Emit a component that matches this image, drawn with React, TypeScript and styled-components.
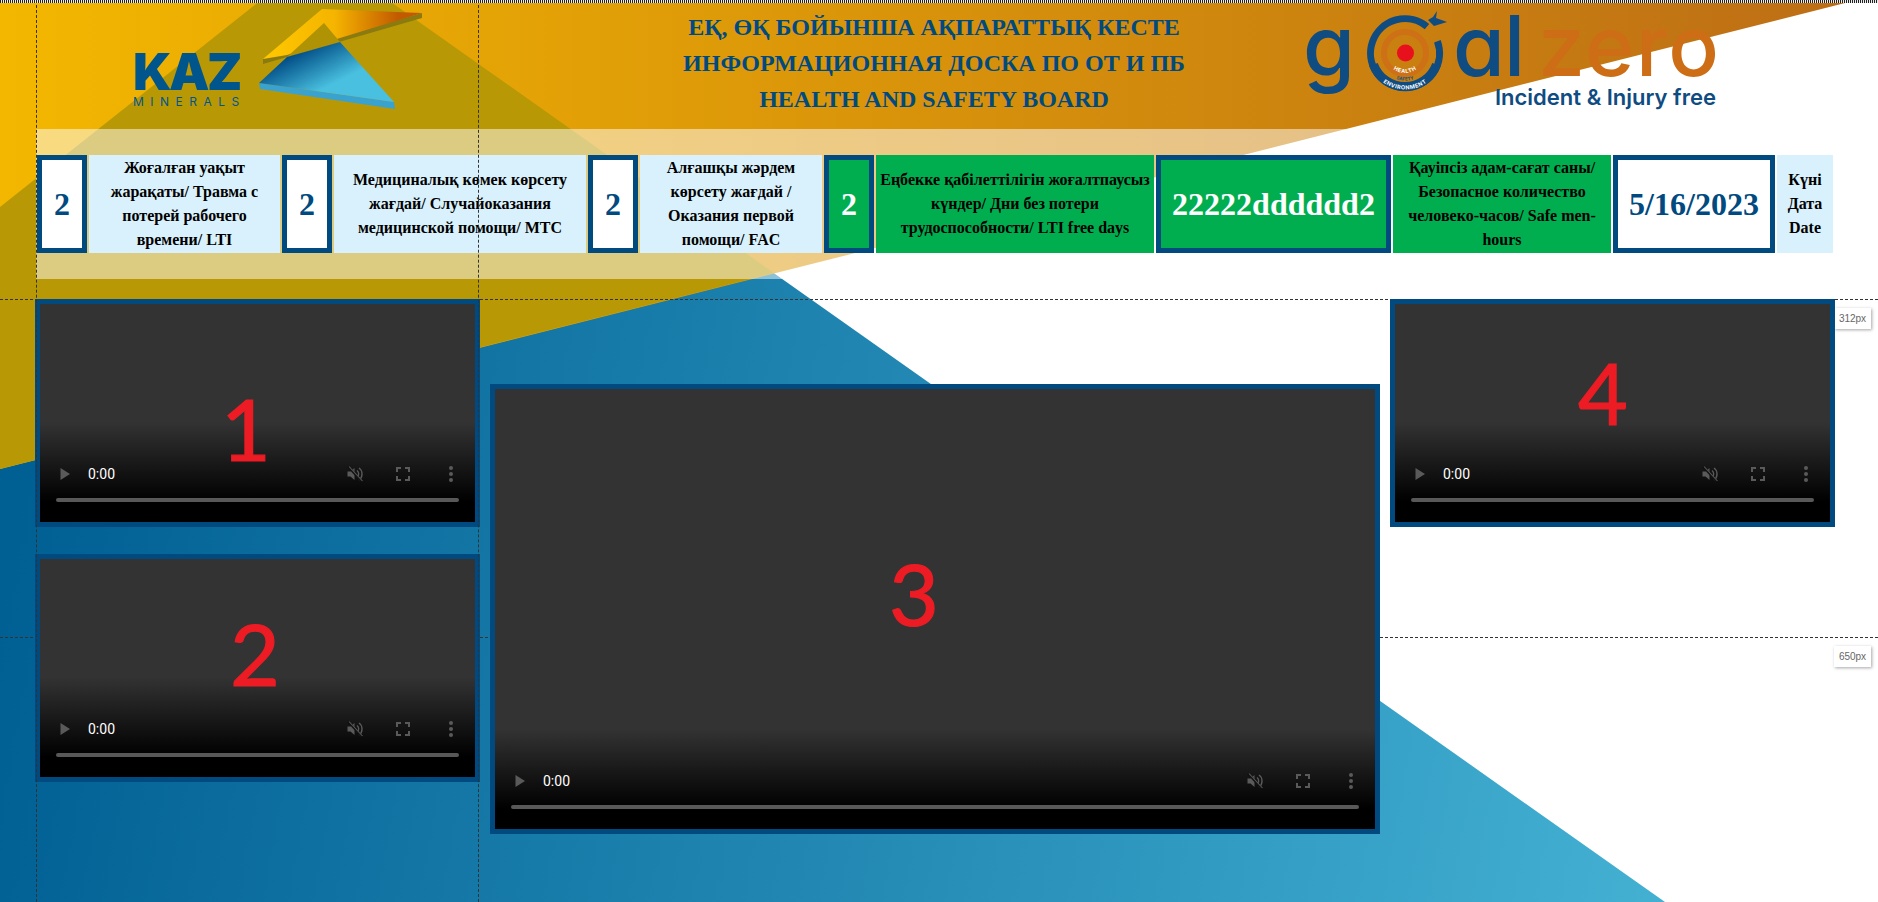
import React from "react";
import styled, { createGlobalStyle } from "styled-components";

const Global = createGlobalStyle`
  html, body { margin: 0; padding: 0; background: #fff; overflow: hidden; }
  * { box-sizing: border-box; }
`;

const Page = styled.div`
  position: relative;
  width: 1878px;
  height: 902px;
  overflow: hidden;
  background: #fff;
  font-family: "Liberation Serif", "Times New Roman", serif;
`;

const Art = styled.svg`
  position: absolute;
  inset: 0;
  width: 1878px;
  height: 902px;
  z-index: 0;
`;

const Ruler = styled.div`
  position: absolute;
  top: 0;
  left: 0;
  right: 0;
  height: 3px;
  z-index: 5;
  background: repeating-linear-gradient(90deg, #222 0 1px, #eee 1px 2px);
`;

const VGuide = styled.div<{ $x: number }>`
  position: absolute;
  top: 0;
  bottom: 0;
  left: ${(p) => p.$x}px;
  width: 0;
  border-left: 1px dashed #333;
  z-index: 4;
`;

const HGuide = styled.div<{ $y: number }>`
  position: absolute;
  left: 0;
  right: 0;
  top: ${(p) => p.$y}px;
  height: 0;
  border-top: 1px dashed #333;
  z-index: 2;
`;

const GuideTag = styled.span`
  position: absolute;
  left: 1834px;
  top: 8px;
  width: 37px;
  height: 21px;
  background: #fff;
  color: #666;
  font: 10px/21px "Liberation Sans", Arial, sans-serif;
  text-align: center;
  box-shadow: 1px 1px 3px rgba(0, 0, 0, 0.35);
`;

const Header = styled.header`
  position: relative;
  z-index: 1;
  display: flex;
  align-items: flex-start;
  height: 129px;
  padding-left: 133px;
`;

const KazWord = styled.div`
  width: 108px;
  margin-top: 53px;
  color: #00558c;
  font-family: Inter, "Liberation Sans", sans-serif;
`;

const KazName = styled.div`
  font-size: 51px;
  font-weight: 900;
  line-height: 38px;
  letter-spacing: -2.6px;
`;

const KazSub = styled.div`
  margin-top: 6px;
  font-size: 12px;
  line-height: 10px;
  letter-spacing: 6.5px;
  white-space: nowrap;
`;

const KazMark = styled.svg`
  flex: none;
  width: 165px;
  height: 110px;
  margin-left: 18px;
  margin-top: 5px;
`;

const Title = styled.h1`
  flex: none;
  width: 600px;
  margin: 9px 0 0 210px;
  color: #004a80;
  font-size: 24px;
  font-weight: 700;
  line-height: 36px;
  text-align: center;
`;

const GoalLogo = styled.div`
  flex: none;
  margin: 4px 0 0 69px;
  font-family: Inter, "Liberation Sans", sans-serif;
`;

const GoalRow = styled.div`
  display: flex;
  align-items: flex-start;
  height: 84px;
  font-size: 84px;
  line-height: 84px;
  font-weight: 500;
  font-feature-settings: "cv11" 1;
`;

const GoalPart = styled.span<{ $w: number; $c: string; $ls: number }>`
  display: block;
  flex: none;
  width: ${(p) => p.$w}px;
  color: ${(p) => p.$c};
  letter-spacing: ${(p) => p.$ls}px;
`;

const GoalTarget = styled.svg`
  flex: none;
  width: 87px;
  height: 92px;
  margin-top: 2px;
`;

const Tagline = styled.div`
  margin: -3px 0 0 192px;
  color: #0f4c81;
  font-size: 22px;
  font-weight: 600;
  line-height: 24px;
  white-space: nowrap;
`;

const Band = styled.section`
  position: relative;
  z-index: 1;
  display: flex;
  gap: 2px;
  width: 1799px;
  height: 150px;
  margin-left: 36px;
  padding: 26px 0 26px 1px;
  background: rgba(255, 255, 255, 0.5);
`;

const LabelCell = styled.div<{ $w: number; $green?: boolean }>`
  flex: none;
  display: flex;
  align-items: center;
  justify-content: center;
  width: ${(p) => p.$w}px;
  height: 98px;
  background: ${(p) => (p.$green ? "#00ae50" : "#d9f1fc")};
  color: #000;
  font-size: 16px;
  font-weight: 700;
  line-height: 24px;
  text-align: center;
  white-space: nowrap;
`;

const ValueCell = styled.div<{ $w: number; $green?: boolean }>`
  flex: none;
  display: flex;
  align-items: center;
  justify-content: center;
  width: ${(p) => p.$w}px;
  height: 98px;
  border: 5px solid #004a80;
  background: ${(p) => (p.$green ? "#00ae50" : "#fff")};
  color: ${(p) => (p.$green ? "#fff" : "#004a80")};
  font-size: 32px;
  font-weight: 700;
`;

const VideoRow = styled.main`
  position: relative;
  z-index: 3;
  display: flex;
  align-items: flex-start;
  gap: 10px;
  margin-top: 20px;
  padding-left: 35px;
`;

const VideoColumn = styled.div<{ $top?: number }>`
  display: flex;
  flex-direction: column;
  gap: 27px;
  margin-top: ${(p) => p.$top ?? 0}px;
`;

const VideoFrame = styled.div<{ $w: number; $h: number }>`
  position: relative;
  display: flex;
  flex-direction: column;
  justify-content: flex-end;
  width: ${(p) => p.$w}px;
  height: ${(p) => p.$h}px;
  border: 5px solid #004a80;
  padding-bottom: 20px;
  background: linear-gradient(to top, #000 20px, #333 100px);
`;

const VideoNumber = styled.span<{ $x: number; $y: number }>`
  position: absolute;
  left: ${(p) => p.$x}px;
  top: ${(p) => p.$y}px;
  transform: translate(-50%, -50%);
  color: #ed1c24;
  font-family: Lato, "Open Sans", sans-serif;
  font-size: 86px;
  line-height: 1;
  -webkit-text-stroke: 1.2px #ed1c24;
`;

const Controls = styled.div`
  display: flex;
  align-items: center;
  height: 24px;
  margin-bottom: 12px;
  padding: 0 16px;
`;

const ControlIcon = styled.svg`
  flex: none;
  width: 16px;
  height: 16px;
  margin-left: 32px;
  &:first-of-type { margin-left: 0; }
`;

const PlayIcon = styled.svg`
  flex: none;
  width: 18px;
  height: 18px;
`;

const Time = styled.span`
  flex: 1;
  margin-left: 14px;
  color: #fff;
  font-family: Roboto, "Liberation Sans", sans-serif;
  font-size: 14px;
  line-height: 24px;
`;

const Timeline = styled.div`
  height: 4px;
  margin: 0 16px;
  border-radius: 2px;
  background: #585858;
`;

function VideoPlayer({ w, h, n, x, y }: { w: number; h: number; n: number; x: number; y: number }) {
  return (
    <VideoFrame $w={w} $h={h}>
      <VideoNumber $x={x} $y={y}>{n}</VideoNumber>
      <Controls>
        <PlayIcon viewBox="0 0 18 18"><path d="M4.500 3 14 9l-9.500 6z" fill="#5a5a5a" /></PlayIcon>
        <Time>0:00</Time>
        <ControlIcon viewBox="0 0 16 16" fill="#5a5a5a">
          <path d="M0.500 5.500h3l4-3.500v12l-4-3.500h-3z" />
          <path d="M10 4.500c2 1.500 2.500 5 0 7M12 2c4 2.500 4 9.500 0 12" fill="none" stroke="#5a5a5a" strokeWidth="1.400" />
          <path d="M1 0.500 15 15.500" stroke="#111" strokeWidth="2.400" />
          <path d="M2 0.500 15.500 15" stroke="#5a5a5a" strokeWidth="1.100" />
        </ControlIcon>
        <ControlIcon viewBox="0 0 16 16" fill="none" stroke="#5a5a5a" strokeWidth="2">
          <path d="M2 6V2h4M10 2h4v4M14 10v4h-4M6 14H2v-4" />
        </ControlIcon>
        <ControlIcon viewBox="0 0 16 16" fill="#5a5a5a">
          <circle cx="8" cy="2" r="2" />
          <circle cx="8" cy="8" r="2" />
          <circle cx="8" cy="14" r="2" />
        </ControlIcon>
      </Controls>
      <Timeline />
    </VideoFrame>
  );
}

export default function App() {
  return (
    <Page>
      <Global />
      <Art viewBox="0 0 1878 902">
        <defs>
          <linearGradient id="blueBg" gradientUnits="userSpaceOnUse" x1="0" y1="600" x2="1650" y2="902">
            <stop offset="0" stopColor="#005f93" />
            <stop offset="1" stopColor="#43b0d2" />
          </linearGradient>
          <linearGradient id="orangeBg" gradientUnits="userSpaceOnUse" x1="0" y1="0" x2="1846" y2="0">
            <stop offset="0" stopColor="#f3b700" />
            <stop offset="1" stopColor="#bd6e15" />
          </linearGradient>
        </defs>
        <polygon points="323,-45 1665,902 0,902 0,207" fill="url(#blueBg)" />
        <polygon points="0,0 1857,0 0,469" fill="url(#orangeBg)" />
        <polygon points="261,0 388,0 774,273 0,469 0,207" fill="#b89905" />
      </Art>
      <Ruler />
      <VGuide $x={36} />
      <VGuide $x={478} />
      <HGuide $y={299}><GuideTag>312px</GuideTag></HGuide>
      <HGuide $y={637}><GuideTag>650px</GuideTag></HGuide>

      <Header>
        <KazWord>
          <KazName>KAZ</KazName>
          <KazSub>MINERALS</KazSub>
        </KazWord>
        <KazMark viewBox="259 5 165 110">
          <defs>
            <linearGradient id="wedge" x1="0" y1="0" x2="1" y2="0">
              <stop offset="0" stopColor="#ffc800" />
              <stop offset="0.45" stopColor="#f5b400" />
              <stop offset="0.85" stopColor="#c25a00" />
            </linearGradient>
            <linearGradient id="prism" gradientUnits="userSpaceOnUse" x1="305" y1="48" x2="325" y2="88">
              <stop offset="0" stopColor="#004c85" />
              <stop offset="1" stopColor="#49c0df" />
            </linearGradient>
          </defs>
          <polygon points="263,59 263,64 422,18 422,13" fill="#8a7a10" />
          <polygon points="263,59 322,9 422,13 340,38 287,55" fill="url(#wedge)" />
          <polygon points="324,23 340,42 287,57" fill="#b09205" />
          <polygon points="259,83 394,102 395,109 260,89" fill="#3aa2ce" />
          <polygon points="287,57 340,42 394,102 259,83" fill="url(#prism)" />
        </KazMark>
        <Title>
          ЕҚ, ӨҚ БОЙЫНША АҚПАРАТТЫҚ КЕСТЕ<br />
          ИНФОРМАЦИОННАЯ ДОСКА ПО ОТ И ПБ<br />
          HEALTH AND SAFETY BOARD
        </Title>
        <GoalLogo>
          <GoalRow>
            <GoalPart $w={63} $c="#0f4c81" $ls={-1}>g</GoalPart>
            <GoalTarget viewBox="0 0 87 92">
              <defs>
                <path id="ringA" d="M2.500 47A36.500 36.500 0 0 0 75.500 47" />
                <path id="ringB" d="M11.500 47A27.500 27.500 0 0 0 66.500 47" />
                <path id="ringC" d="M19 47A20 20 0 0 0 59 47" />
              </defs>
              <path d="M61 20.600A34.500 34.500 0 1 0 71.400 35.200" fill="none" stroke="#0f4c81" strokeWidth="7" />
              <polygon points="71,5 70,12 81,16 68,20 62,14 67,11" fill="#0f4c81" />
              <circle cx="39" cy="47" r="21" fill="none" stroke="#cd7016" strokeWidth="6" />
              <circle cx="39.500" cy="47" r="8.500" fill="#e8101c" />
              <path d="M7.500 58.500A33.500 33.500 0 0 0 70.500 58.500" fill="none" stroke="#0f4c81" strokeWidth="9" />
              <text fill="#fff" fontSize="5.500" fontWeight="700" letterSpacing="0.500">
                <textPath href="#ringA" startOffset="50%" textAnchor="middle">ENVIRONMENT</textPath>
              </text>
              <text fill="#fff" fontSize="5.500" fontWeight="700" letterSpacing="0.500">
                <textPath href="#ringC" startOffset="50%" textAnchor="middle">HEALTH</textPath>
              </text>
              <text fill="#0f4c81" fontSize="4.500" fontWeight="700">
                <textPath href="#ringB" startOffset="50%" textAnchor="middle">SAFETY</textPath>
              </text>
            </GoalTarget>
            <GoalPart $w={85} $c="#0f4c81" $ls={-1}>al</GoalPart>
            <GoalPart $w={190} $c="#cd6e16" $ls={1.5}>zero</GoalPart>
          </GoalRow>
          <Tagline>Incident &amp; Injury free</Tagline>
        </GoalLogo>
      </Header>

      <Band>
        <ValueCell $w={50}>2</ValueCell>
        <LabelCell $w={191}>
          <div>Жоғалған уақыт<br />жарақаты/ Травма с<br />потерей рабочего<br />времени/ LTI</div>
        </LabelCell>
        <ValueCell $w={50}>2</ValueCell>
        <LabelCell $w={252}>
          <div>Медициналық көмек көрсету<br />жағдай/ Случайоказания<br />медицинской помощи/ MTC</div>
        </LabelCell>
        <ValueCell $w={50}>2</ValueCell>
        <LabelCell $w={182}>
          <div>Алғашқы жәрдем<br />көрсету жағдай /<br />Оказания первой<br />помощи/ FAC</div>
        </LabelCell>
        <ValueCell $w={50} $green>2</ValueCell>
        <LabelCell $w={278} $green>
          <div>Еңбекке қабілеттілігін жоғалтпаусыз<br />күндер/ Дни без потери<br />трудоспособности/ LTI free days</div>
        </LabelCell>
        <ValueCell $w={235} $green>22222dddddd2</ValueCell>
        <LabelCell $w={218} $green>
          <div>Қауіпсіз адам-сағат саны/<br />Безопасное количество<br />человеко-часов/ Safe men-<br />hours</div>
        </LabelCell>
        <ValueCell $w={162}>5/16/2023</ValueCell>
        <LabelCell $w={56}>
          <div>Күні<br />Дата<br />Date</div>
        </LabelCell>
      </Band>

      <VideoRow>
        <VideoColumn>
          <VideoPlayer w={445} h={228} n={1} x={206} y={124} />
          <VideoPlayer w={445} h={228} n={2} x={215} y={94} />
        </VideoColumn>
        <VideoColumn $top={85}>
          <VideoPlayer w={890} h={450} n={3} x={419} y={204} />
        </VideoColumn>
        <VideoColumn>
          <VideoPlayer w={445} h={228} n={4} x={208} y={88} />
        </VideoColumn>
      </VideoRow>
    </Page>
  );
}
